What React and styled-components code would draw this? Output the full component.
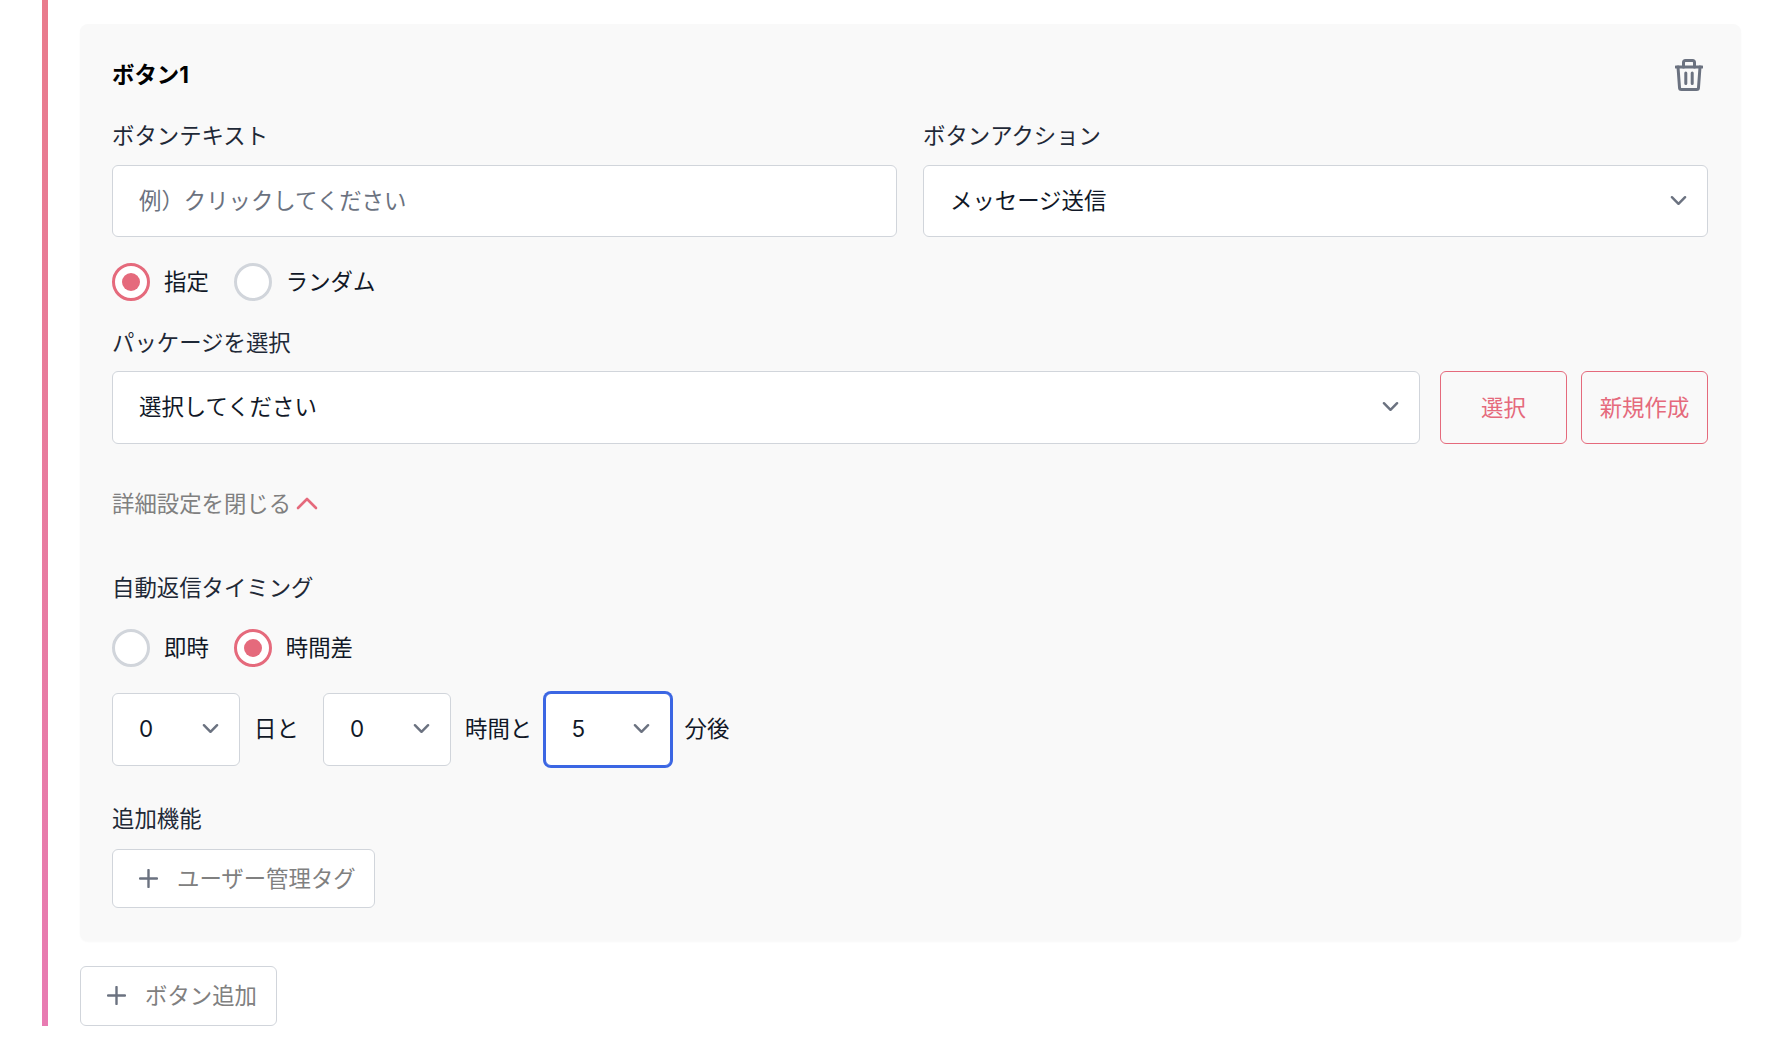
import React from "react";
import styled, { createGlobalStyle } from "styled-components";

const Global = createGlobalStyle`
  html, body { margin: 0; padding: 0; background: #fff; }
  body { font-family: Inter, "Noto Sans CJK JP", "Noto Sans", sans-serif; color: #1f2937; font-size: 22.4px; line-height: 33px; }
  * { box-sizing: border-box; }
`;

const Page = styled.div`
  padding: 0 46px 0 42px;
`;
const Section = styled.section`
  border-left: 6px solid;
  border-image: linear-gradient(180deg, #e97b8c, #e87bb2) 1;
  padding: 24px 0 0 32px;
`;
const Card = styled.div`
  background: #f9f9f9;
  border-radius: 8px;
  box-shadow: 0 1px 2px rgba(0, 0, 0, 0.03);
  padding: 32px 33px 33px 32px;
`;
const TitleRow = styled.div`
  display: flex;
  align-items: center;
  justify-content: space-between;
  height: 36px;
`;
const Title = styled.h2`
  margin: 0;
  font-size: 22.4px;
  font-weight: 700;
  color: #000;
`;
const TrashButton = styled.button`
  border: 0;
  background: none;
  padding: 0;
  margin: 2px 5px 0 0;
  display: flex;
  color: #6b7280;
`;
const Columns = styled.div`
  display: grid;
  grid-template-columns: 1fr 1fr;
  gap: 26px;
  margin-top: 26px;
`;
const Label = styled.div`
  font-size: 22.4px;
  line-height: 33px;
  color: #1f2937;
  margin-top: ${(p) => p.$top || 1}px;
  margin-bottom: ${(p) => p.$bottom || 13}px;
`;
const TextInput = styled.input`
  display: block;
  width: 100%;
  height: 72px;
  padding: 0 26px 2px;
  font: inherit;
  background: #fff;
  border: 1px solid #d1d5db;
  border-radius: 6px;
  outline: 0;
  &::placeholder { color: #6b7280; opacity: 1; }
`;
const SelectBox = styled.div`
  display: flex;
  align-items: center;
  justify-content: space-between;
  flex: ${(p) => (p.$width ? "none" : "1")};
  width: ${(p) => (p.$width ? `${p.$width}px` : "auto")};
  height: ${(p) => p.$height || 72}px;
  padding: 0 12px 2px 26px;
  background: #fff;
  border: 1px solid #d1d5db;
  border-radius: 6px;
  color: #111827;
  ${(p) => p.$focused && `border: 1px solid #3b66e3; box-shadow: 0 0 0 2px #3b66e3;`}
`;
const Chevron = styled.svg`
  width: 33px;
  height: 33px;
  flex: none;
  fill: none;
  stroke: #6b7280;
  stroke-width: 1.5;
  stroke-linecap: round;
  stroke-linejoin: round;
`;
const RadioGroup = styled.div`
  display: flex;
  align-items: center;
  height: 38px;
  margin-top: ${(p) => p.$top}px;
`;
const RadioItem = styled.label`
  display: flex;
  align-items: center;
  margin-right: 25px;
  color: #111827;
`;
const RadioText = styled.span`
  margin-bottom: 2px;
`;
const RadioCircle = styled.span`
  width: 38px;
  height: 38px;
  border-radius: 50%;
  background: #fff;
  border: 3.5px solid ${(p) => (p.$on ? "#e56a7c" : "#d1d5db")};
  display: flex;
  align-items: center;
  justify-content: center;
  margin-right: 14px;
  &::after {
    content: "";
    display: ${(p) => (p.$on ? "block" : "none")};
    width: 18px;
    height: 18px;
    border-radius: 50%;
    background: #e56a7c;
  }
`;
const PackageRow = styled.div`
  display: flex;
  align-items: stretch;
  height: 72.6px;
`;
const OutlineButton = styled.button`
  width: 127px;
  height: 100%;
  flex: none;
  margin-left: ${(p) => p.$left}px;
  padding: 0;
  font: inherit;
  color: #e56a7c;
  background: transparent;
  border: 1px solid #e56a7c;
  border-radius: 6px;
`;
const Toggle = styled.div`
  display: flex;
  align-items: center;
  gap: 5px;
  margin-top: 43px;
  color: #808080;
`;
const UpIcon = styled.svg`
  width: 22px;
  height: 14px;
  fill: none;
  stroke: #e56a7c;
  stroke-width: 2.6;
  stroke-linecap: round;
  stroke-linejoin: round;
`;
const TimeRow = styled.div`
  display: flex;
  align-items: center;
  gap: 14px;
  margin-top: 25.5px;
`;
const Unit = styled.span`
  color: #111827;
  white-space: nowrap;
  margin-bottom: 2px;
  width: ${(p) => (p.$width ? `${p.$width}px` : "auto")};
`;
const AddButton = styled.button`
  display: flex;
  align-items: center;
  width: ${(p) => p.$width}px;
  height: ${(p) => p.$height}px;
  padding: 0 0 0 26px;
  margin-top: ${(p) => p.$top || 0}px;
  font: inherit;
  color: #808080;
  background: #fff;
  border: 1px solid #d1d5db;
  border-radius: 6px;
`;
const PlusIcon = styled.svg`
  width: 19px;
  height: 19px;
  margin-right: 19px;
  flex: none;
  stroke: #6b7280;
  stroke-width: 2.4;
  stroke-linecap: round;
`;

const ChevronDown = () => (
  <Chevron viewBox="0 0 20 20"><path d="M6 8l4 4 4-4" /></Chevron>
);
const Plus = () => (
  <PlusIcon viewBox="0 0 19 19"><path d="M9.5 1v17M1 9.5h17" /></PlusIcon>
);
const Radio = ({ on, children }) => (
  <RadioItem><RadioCircle $on={on} /><RadioText>{children}</RadioText></RadioItem>
);

export default function App() {
  return (
    <Page>
      <Global />
      <Section>
        <Card>
          <TitleRow>
            <Title>ボタン1</Title>
            <TrashButton aria-label="削除">
              <svg width="28" height="32" viewBox="0 0 28 32" fill="none" stroke="currentColor" strokeWidth="3" strokeLinecap="round" strokeLinejoin="round">
                <path d="M1 8h26" />
                <path d="M8.5 8V3.5a2 2 0 0 1 2-2h7a2 2 0 0 1 2 2V8" />
                <path d="M3 8l1.5 20.5a2 2 0 0 0 2 2h15a2 2 0 0 0 2-2L25 8" />
                <path d="M10.8 14v10.5M17.2 14v10.5" />
              </svg>
            </TrashButton>
          </TitleRow>
          <Columns>
            <div>
              <Label>ボタンテキスト</Label>
              <TextInput placeholder="例）クリックしてください" />
            </div>
            <div>
              <Label>ボタンアクション</Label>
              <SelectBox>メッセージ送信<ChevronDown /></SelectBox>
            </div>
          </Columns>
          <RadioGroup $top={26}>
            <Radio on>指定</Radio>
            <Radio>ランダム</Radio>
          </RadioGroup>
          <Label $top={24.5} $bottom={12.5}>パッケージを選択</Label>
          <PackageRow>
            <SelectBox $height={72.6}>選択してください<ChevronDown /></SelectBox>
            <OutlineButton $left={20}>選択</OutlineButton>
            <OutlineButton $left={14}>新規作成</OutlineButton>
          </PackageRow>
          <Toggle>
            詳細設定を閉じる
            <UpIcon viewBox="0 0 22 14"><path d="M2 12l9-9 9 9" /></UpIcon>
          </Toggle>
          <Label $top={51} $bottom={25.5}>自動返信タイミング</Label>
          <RadioGroup $top={0}>
            <Radio>即時</Radio>
            <Radio on>時間差</Radio>
          </RadioGroup>
          <TimeRow>
            <SelectBox $width={128} $height={73}>0<ChevronDown /></SelectBox>
            <Unit $width={55}>日と</Unit>
            <SelectBox $width={128} $height={73}>0<ChevronDown /></SelectBox>
            <Unit $width={65.5}>時間と</Unit>
            <SelectBox $width={126} $height={73} $focused>5<ChevronDown /></SelectBox>
            <Unit>分後</Unit>
          </TimeRow>
          <Label $top={36} $bottom={14}>追加機能</Label>
          <AddButton $width={263} $height={59}><Plus />ユーザー管理タグ</AddButton>
        </Card>
        <AddButton $width={197} $height={60} $top={25}><Plus />ボタン追加</AddButton>
      </Section>
    </Page>
  );
}
